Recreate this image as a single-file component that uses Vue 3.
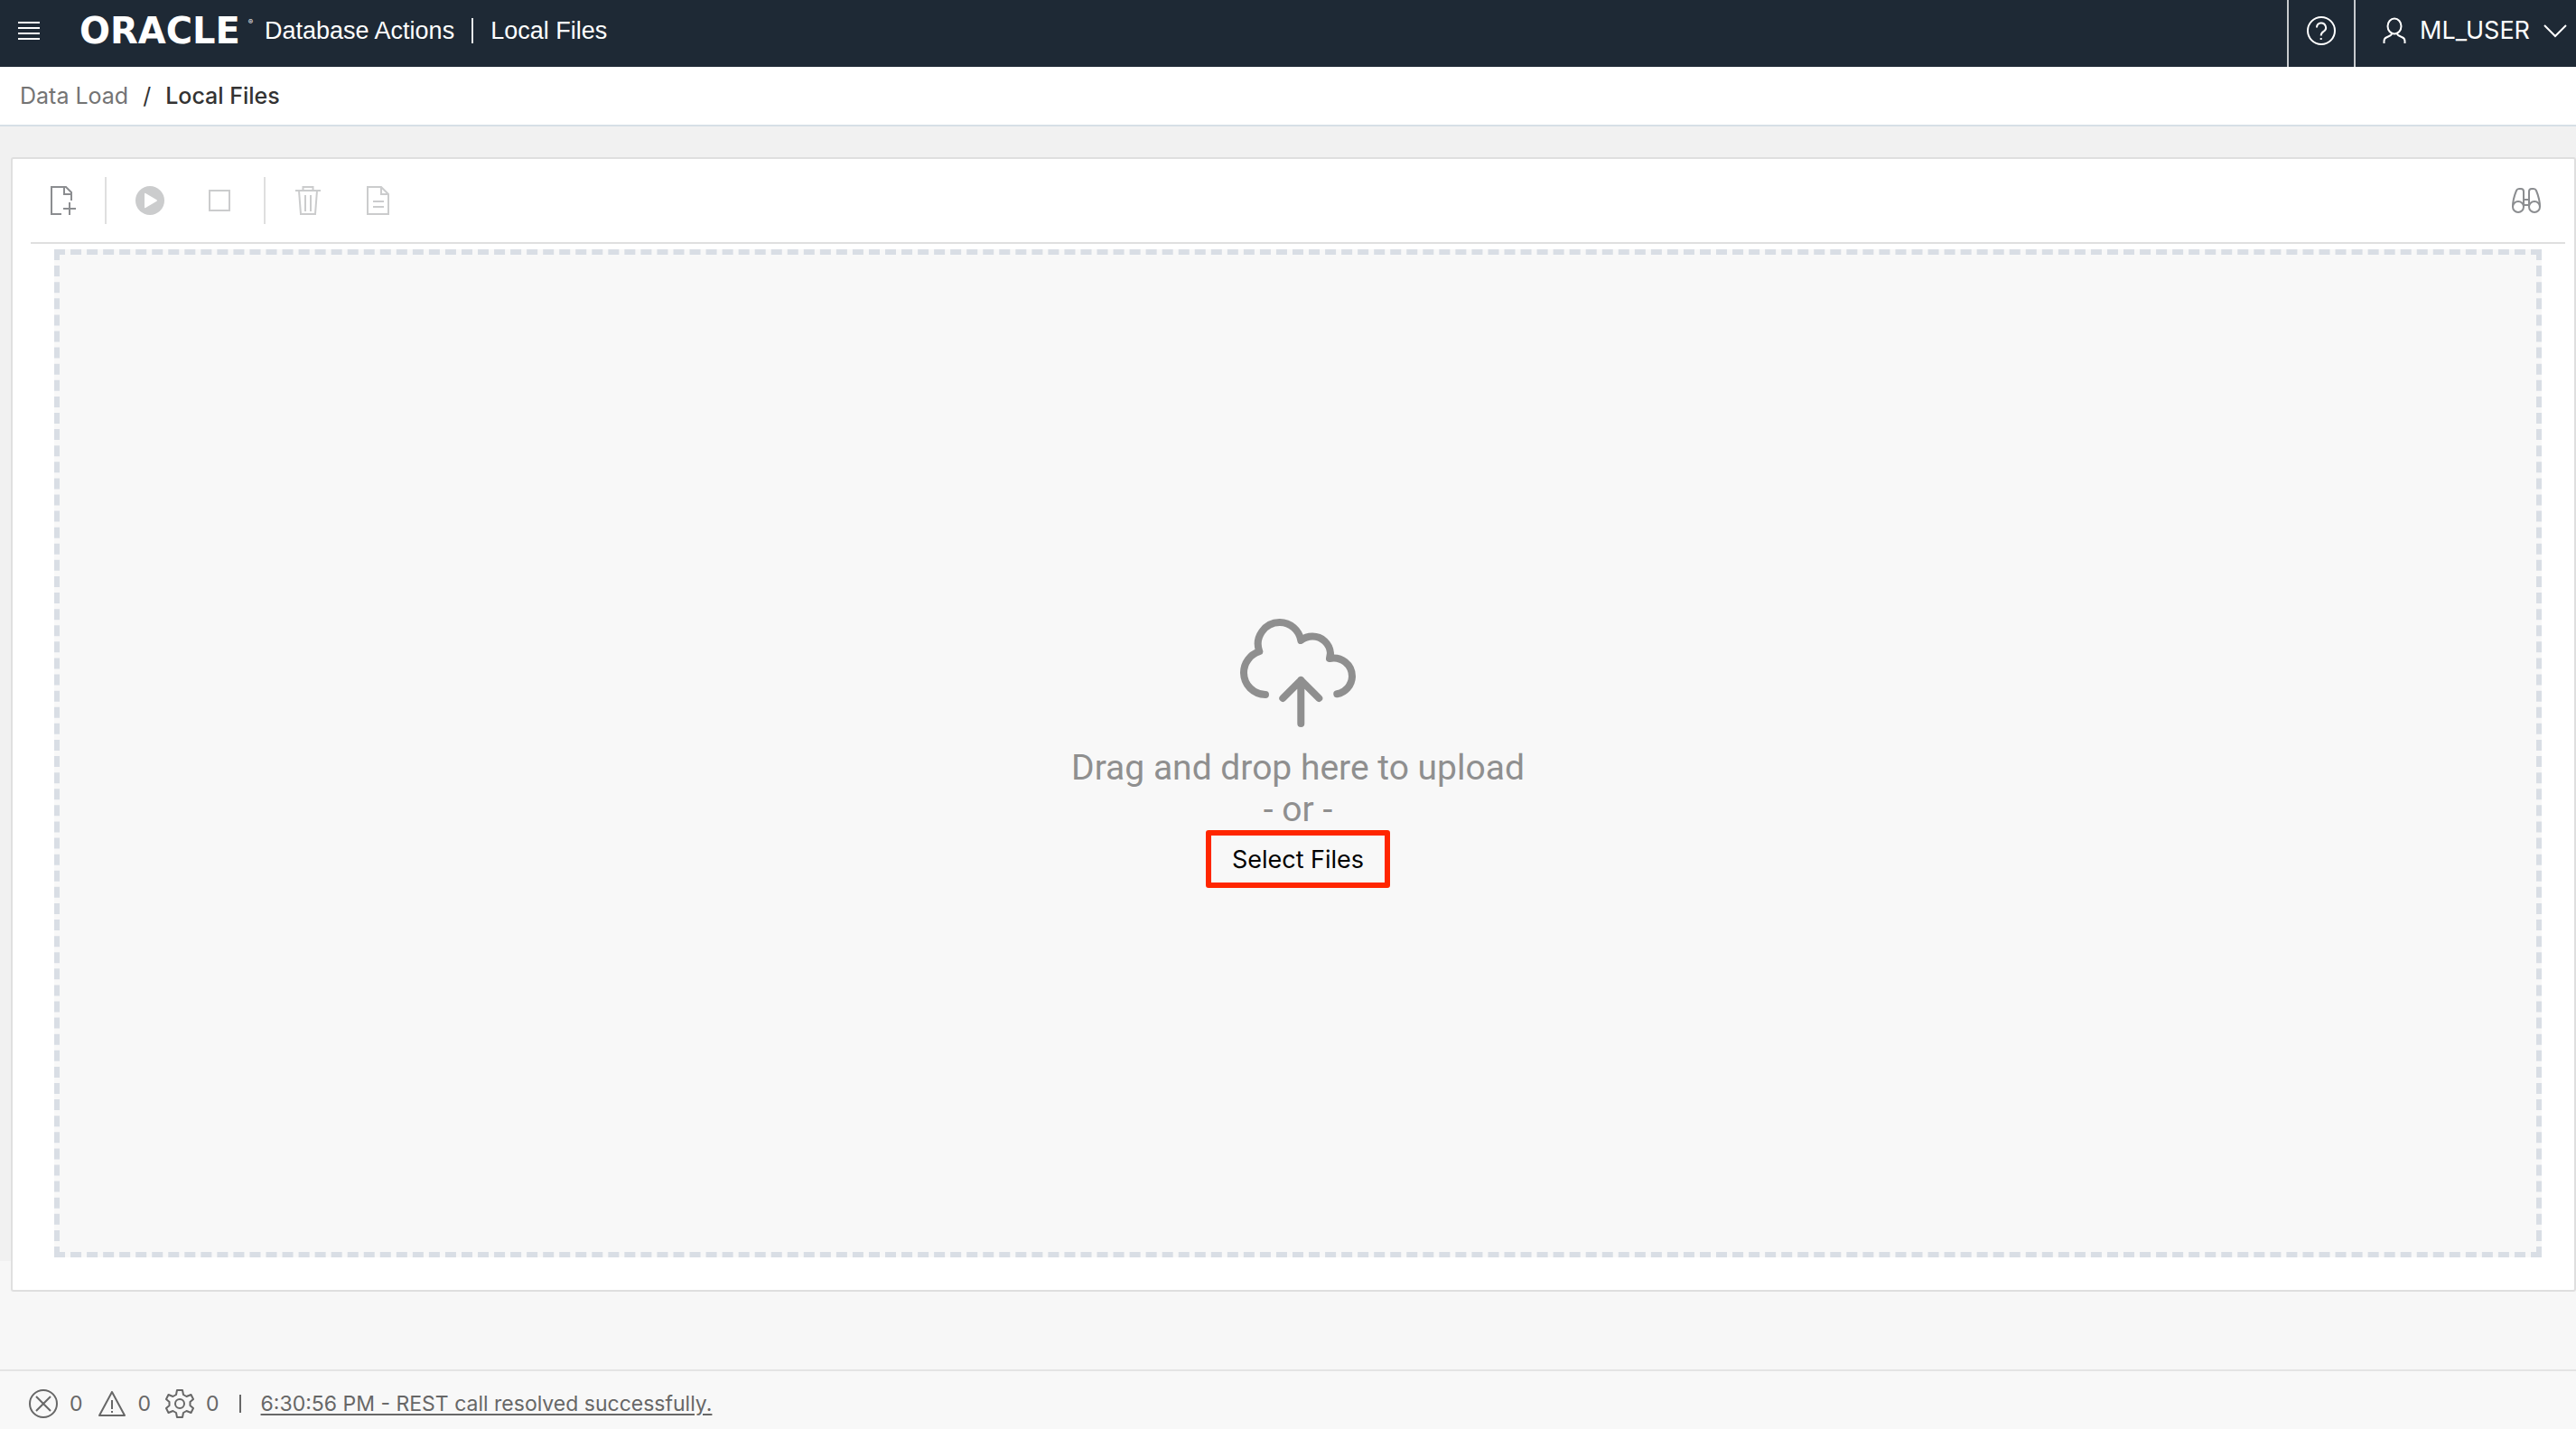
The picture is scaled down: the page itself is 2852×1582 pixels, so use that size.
<script setup>
const counters = [
  { kind: 'error', label: 'Errors', count: 0 },
  { kind: 'warning', label: 'Warnings', count: 0 },
  { kind: 'process', label: 'Processes', count: 0 },
]
</script>

<template>
  <div class="page">
    <header class="topbar">
      <button class="menu" type="button" aria-label="Navigation menu">
        <svg width="24" height="20" viewBox="0 0 24 20" fill="currentColor">
          <path d="M0 0h24v2H0zM0 6h24v2H0zM0 12h24v2H0zM0 18h24v2H0z" />
        </svg>
      </button>
      <a class="brand" href="#">
        <span class="wordmark">ORACLE</span>
        <sup class="reg">®</sup>
      </a>
      <h1 class="title">
        <span>Database Actions</span>
        <span class="bar"></span>
        <span>Local Files</span>
      </h1>
      <button class="help" type="button" aria-label="Help">
        <svg width="34" height="34" viewBox="0 0 34 34" fill="none" stroke="currentColor" stroke-width="2">
          <circle cx="17" cy="17" r="15" />
          <path d="M12 13.500a5 5 0 1 1 7.500 4.300c-2 1.200-2.800 2-2.800 4.700" />
          <path d="M15.700 26h2" />
        </svg>
      </button>
      <button class="user" type="button">
        <svg width="26" height="30" viewBox="0 0 26 30" fill="none" stroke="currentColor" stroke-width="2">
          <ellipse cx="13" cy="10" rx="7.500" ry="8.500" />
          <path d="M1.500 29v-2.500c0-2.500 1-3.500 3-4.300 3-1.200 5-1.700 6-4M24.500 29v-2.500c0-2.500-1-3.500-3-4.300-3-1.200-5-1.700-6-4" />
        </svg>
        <span>ML_USER</span>
        <svg width="26" height="16" viewBox="0 0 26 16" fill="none" stroke="currentColor" stroke-width="2">
          <path d="M1 2l12 12L25 2" />
        </svg>
      </button>
    </header>

    <nav class="crumbs" aria-label="Breadcrumb">
      <a href="#">Data Load</a>
      <span class="slash">/</span>
      <span class="current">Local Files</span>
    </nav>

    <main class="main">
      <section class="card">
        <div class="toolbar">
          <button class="tool add" type="button" aria-label="Add file">
            <svg width="32" height="32" viewBox="0 0 32 32" fill="none" stroke="currentColor" stroke-width="2">
              <path d="M16 31H5V1h16l6 6v9M19 1v8h8" />
              <path d="M25 18v14M18 25h14" />
            </svg>
          </button>
          <span class="rule"></span>
          <button class="tool" type="button" aria-label="Start" disabled>
            <svg width="32" height="32" viewBox="0 0 32 32">
              <circle cx="16" cy="16" r="16" fill="currentColor" />
              <path d="M10 8.500v15q0 1.200 1.200.6l12.300-7.300q1-.8 0-1.600L11.200 7.900q-1.200-.6-1.200.6z" fill="#fff" />
            </svg>
          </button>
          <button class="tool" type="button" aria-label="Stop" disabled>
            <svg width="32" height="32" viewBox="0 0 32 32" fill="none" stroke="currentColor" stroke-width="2">
              <rect x="4" y="5" width="22" height="22" />
            </svg>
          </button>
          <span class="rule"></span>
          <button class="tool" type="button" aria-label="Remove all" disabled>
            <svg width="32" height="32" viewBox="0 0 32 32" fill="none" stroke="currentColor" stroke-width="2">
              <path d="M1 5h28M9.500 5V1h11v4M5 5l2 26h16l2-26M12 10v18M18 10v18" />
            </svg>
          </button>
          <button class="tool" type="button" aria-label="Report" disabled>
            <svg width="32" height="32" viewBox="0 0 32 32" fill="none" stroke="currentColor" stroke-width="2">
              <path d="M3 1h15l8 8v22H3zM18 1v8h8M9 17h12M9 23h12" />
            </svg>
          </button>
          <button class="tool find" type="button" aria-label="Data viewer">
            <svg width="34" height="28" viewBox="0 0 34 28" fill="none" stroke="currentColor" stroke-width="2">
              <circle cx="8" cy="21" r="6" />
              <circle cx="26" cy="21" r="6" />
              <path d="M2 21c0-6 1.500-12 4-18q.8-2 3-2h2q3 0 3 3v17M32 21c0-6-1.500-12-4-18q-.8-2-3-2h-2q-3 0-3 3v17M14 13h6M14 19h6" />
            </svg>
          </button>
        </div>

        <div class="dropzone">
          <svg class="cloud" width="128" height="120" viewBox="0 0 128 120" fill="none" stroke="currentColor" stroke-width="8" stroke-linecap="round" stroke-linejoin="round">
            <path d="M28 84A24.500 24.500 0 0 1 4 60A24.500 24.500 0 0 1 21.300 36.300A24 24 0 0 1 44 4A24 24 0 0 1 67.300 24A20.500 20.500 0 0 1 80 19.500A20 20 0 0 1 100 38L99 44A20.500 20.500 0 0 1 124 64A20.500 20.500 0 0 1 107.300 83.300" />
            <path d="M67.300 116V68M47.300 88l20-20 20 20" />
          </svg>
          <p class="hint">Drag and drop here to upload<br>- or -</p>
          <button class="select" type="button">Select Files</button>
        </div>
      </section>
    </main>

    <footer class="status">
      <span v-for="c in counters" :key="c.kind" class="counter" :title="c.label">
        <svg width="32" height="32" viewBox="0 0 32 32" fill="none" stroke="currentColor" stroke-width="2">
          <template v-if="c.kind === 'error'">
            <circle cx="16" cy="16" r="15" />
            <path d="M8 8l16 16M24 8L8 24" />
          </template>
          <template v-else-if="c.kind === 'warning'">
            <path d="M16 3L2 29h28zM16 12v10M16 24v2" stroke-linejoin="round" />
          </template>
          <template v-else>
            <path stroke-linejoin="round" d="M13 1h6l1 5 3.500 2L28.500 6l2.500 5-3.500 3v4l3.500 3-2.500 5-5-2L20 26l-1 5h-6l-1-5-3.500-2-5 2L1 21l3.500-3v-4L1 11l2.500-5 5 2L12 6z" />
            <circle cx="16" cy="16" r="5" />
          </template>
        </svg>
        <span>{{ c.count }}</span>
      </span>
      <span class="sep"></span>
      <a class="log" href="#">6:30:56 PM - REST call resolved successfully.</a>
    </footer>
  </div>
</template>

<style>
body {
  margin: 0;
}
</style>

<style scoped>
.page {
  display: flex;
  flex-direction: column;
  min-height: 100vh;
  background: #f7f7f7;
  font-family: Inter, "Liberation Sans", sans-serif;
}
button {
  margin: 0;
  padding: 0;
  border: 0;
  background: none;
  color: inherit;
  font: inherit;
  cursor: pointer;
}
svg {
  display: block;
  flex: none;
}
.topbar {
  display: flex;
  align-items: stretch;
  height: 74px;
  background: #1e2935;
  color: #fff;
}
.menu {
  padding: 0 20px 6px;
  display: flex;
  align-items: center;
}
.brand {
  display: flex;
  align-items: center;
  justify-content: space-between;
  width: 192px;
  margin-left: 24px;
  padding-bottom: 6px;
  color: #fff;
  text-decoration: none;
  box-sizing: border-box;
}
.wordmark {
  font: bold 40px/40px "DejaVu Sans", sans-serif;
}
.reg {
  font-size: 8px;
  line-height: 8px;
  align-self: flex-start;
  margin-top: 20px;
}
.title {
  display: flex;
  align-items: center;
  gap: 19px;
  margin: 0 auto 0 13px;
  padding-bottom: 6px;
  font: 27px/32px "Liberation Sans", Arial, sans-serif;
}
.bar {
  width: 2px;
  height: 28px;
  background: #e6e8ea;
}
.help {
  display: flex;
  align-items: center;
  justify-content: center;
  width: 74px;
  padding-bottom: 6px;
  border-left: 2px solid #c7cacd;
}
.user {
  display: flex;
  align-items: center;
  gap: 15px;
  padding: 0 10px 6px 30px;
  border-left: 2px solid #c7cacd;
  font-size: 27px;
  line-height: 32px;
}
.crumbs {
  display: flex;
  align-items: center;
  gap: 16px;
  height: 64px;
  padding: 0 22px;
  border-bottom: 2px solid #d6dfe6;
  background: #fff;
  color: #333;
  font-size: 25px;
}
.crumbs a {
  color: #747474;
  text-decoration: none;
}
.current {
  font-weight: 500;
}
.main {
  display: flex;
  flex: 1;
  padding: 34px 0 86px 12px;
  background: linear-gradient(#f1f1f1, #f1f1f1) no-repeat 0 0 / 100% calc(100% - 120px);
}
.card {
  display: flex;
  flex: 1;
  flex-direction: column;
  border: 2px solid #dfdfdf;
  border-radius: 3px;
  background: #fff;
}
.toolbar {
  display: flex;
  align-items: center;
  height: 92px;
  margin: 0 10px 0 20px;
  padding: 0 26px 0 18px;
  border-bottom: 2px solid #dfdfdf;
}
.tool {
  color: #8b8d90;
}
.tool:disabled {
  color: #cbcccd;
}
.tool + .tool {
  margin-left: 46px;
}
.toolbar .find {
  margin-left: auto;
}
.rule {
  width: 2px;
  height: 52px;
  margin: 0 32px;
  background: #dfdfdf;
}
.dropzone {
  display: flex;
  flex: 1;
  flex-direction: column;
  align-items: center;
  justify-content: center;
  margin: 6px 36px 36px 46px;
  border: 6px dashed #d9dee5;
  background: #f8f8f8;
  color: #8f8f8f;
}
.hint {
  margin: 22px 0 0;
  font-family: Roboto, "Liberation Sans", sans-serif;
  font-size: 39px;
  line-height: 46px;
  text-align: center;
}
.select {
  height: 64px;
  padding: 0 23px;
  border: 6px solid #ff2600;
  border-radius: 3px;
  color: #000;
  font-size: 27px;
}
.status {
  display: flex;
  align-items: center;
  height: 66px;
  padding: 8px 32px 0;
  box-sizing: border-box;
  border-top: 2px solid #e4e4e4;
  background: #f8f8f8;
  color: #676767;
  font-size: 23px;
  line-height: 32px;
}
.counter {
  display: flex;
  align-items: center;
  gap: 13px;
  margin-right: 16px;
}
.sep {
  width: 2px;
  height: 20px;
  margin: 0 22px 0 6px;
  background: #676767;
}
.log {
  color: inherit;
  text-underline-offset: 3px;
  text-decoration-thickness: 2px;
}
</style>
